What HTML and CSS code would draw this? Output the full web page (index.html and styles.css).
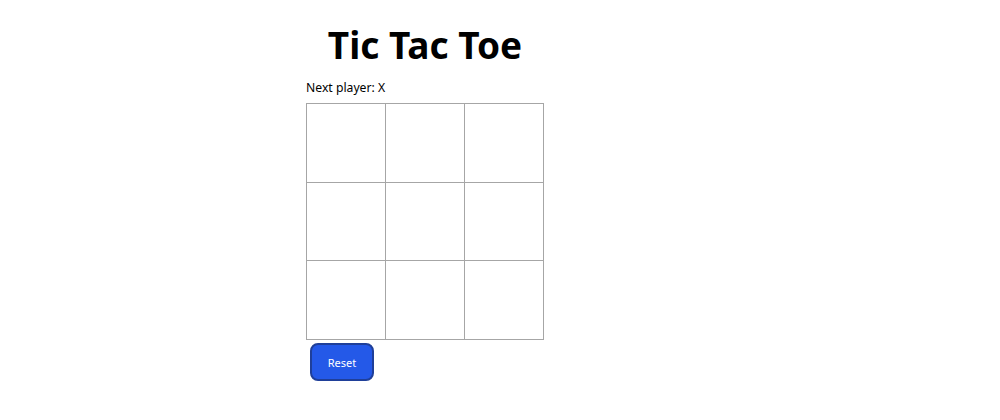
FILE: index.html
```html
<!DOCTYPE html>
<html lang="en">
<head>
    <meta charset="UTF-8">
    <meta name="viewport" content="width=device-width, initial-scale=1.0">
    <title>Tic Tac Toe</title>
    <link rel="stylesheet" href="styles.css">
</head>
<body>
    <div class="game">
        <h1>Tic Tac Toe</h1>
        <div class="status">Next player: X</div>
        <div class="board">
            <div class="square"></div>
            <div class="square"></div>
            <div class="square"></div>
            <div class="square"></div>
            <div class="square"></div>
            <div class="square"></div>
            <div class="square"></div>
            <div class="square"></div>
            <div class="square"></div>
        </div>
        <button class="reset-button">Reset</button>
    </div>
</body>
</html>
```

FILE: styles.css
```css
body {
    font-family: "Noto Sans", "Open Sans", sans-serif;
    margin: 0;
    padding: 0;
    background-color: #fff;
    color: #000;
}
.game {
    width: 238px;
    margin-left: 306px;
    padding-top: 20px;
}
h1 {
    margin: 0;
    text-align: center;
    font-size: 37px;
    font-weight: bold;
    line-height: 50px;
}
.status {
    margin-top: 8px;
    font-size: 12.2px;
    line-height: 20px;
    margin-bottom: 5px;
}
.board {
    display: grid;
    grid-template-columns: repeat(3, 79px);
    grid-template-rows: 79px 78px 79px;
    border-left: 1px solid #a6a6a6;
    border-top: 1px solid #a6a6a6;
    width: max-content;
}
.square {
    border-right: 1px solid #a6a6a6;
    border-bottom: 1px solid #a6a6a6;
}
.reset-button {
    display: block;
    margin: 3px 0 0 4px;
    width: 64px;
    height: 38px;
    background-color: #2459e8;
    border: 2px solid #1f3f99;
    border-radius: 8px;
    color: #fff;
    font-family: inherit;
    font-size: 11px;
    cursor: pointer;
}
```
